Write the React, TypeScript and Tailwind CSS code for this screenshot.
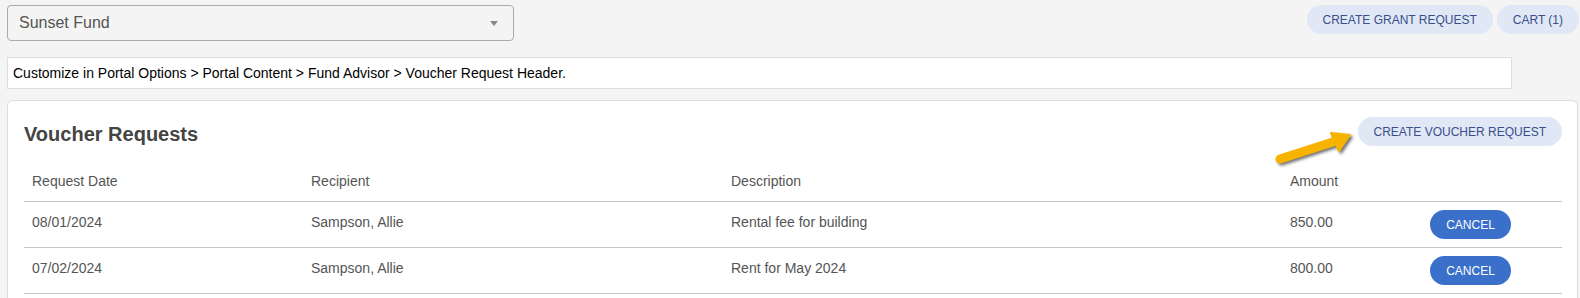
const rows = [
  { date: '08/01/2024', recipient: 'Sampson, Allie', description: 'Rental fee for building', amount: '850.00' },
  { date: '07/02/2024', recipient: 'Sampson, Allie', description: 'Rent for May 2024', amount: '800.00' },
];

const cols = 'grid grid-cols-[279px_420px_559px_140px_1fr]';

export default function App() {
  return (
    <main className="min-h-screen bg-[#f4f4f4] font-['Liberation_Sans',Arial,sans-serif] pl-[7px] pr-px pt-[5px]">
      <div className="flex items-start justify-between">
        <div className="w-[507px] h-[36px] rounded-[4px] border border-[#aaaaaa] flex items-center justify-between pl-[11px] pr-[14px]">
          <span className="text-[16px] text-[#555555]">Sunset Fund</span>
          <span className="w-0 h-0 border-l-[4px] border-r-[4px] border-t-[5px] border-l-transparent border-r-transparent border-t-[#888888] mr-[1px]" />
        </div>
        <div className="flex gap-[4px]">
          <button className="h-[29px] px-[16px] rounded-full bg-[#e0e8f5] text-[12px] text-[#3a4e8c]">CREATE GRANT REQUEST</button>
          <button className="h-[29px] px-[16px] rounded-full bg-[#e0e8f5] text-[12px] text-[#3a4e8c]">CART (1)</button>
        </div>
      </div>

      <div className="mt-[16px] w-[1505px] h-[32px] bg-white border border-[#dddddd] flex items-center pl-[5px] text-[14px] text-black">
        Customize in Portal Options &gt; Portal Content &gt; Fund Advisor &gt; Voucher Request Header.
      </div>

      <section className="relative mt-[11px] mr-px bg-white border border-[#dddddd] rounded-[6px] pl-[16px] pr-[15px] pt-[16px] pb-4">
        <div className="flex items-center justify-between h-[29px]">
          <h2 className="text-[20px] font-bold text-[#444444] mt-[4px]">Voucher Requests</h2>
          <button className="h-[29px] px-[16px] rounded-full bg-[#e0e8f5] text-[12px] text-[#3a4e8c]">CREATE VOUCHER REQUEST</button>
        </div>

        <svg className="absolute left-[1262px] top-[25px] overflow-visible" width="92" height="40" viewBox="0 0 92 40">
          <g style={{ filter: 'drop-shadow(2px 2px 1.5px rgba(0,0,0,0.55))' }}>
            <line x1="10" y1="33" x2="66" y2="15" stroke="#f6b400" strokeWidth="9" strokeLinecap="round" />
            <polygon points="80,9 61,7 69,25" fill="#f6b400" stroke="#f6b400" strokeWidth="2" strokeLinejoin="round" />
          </g>
        </svg>

        <div className={`${cols} h-[56px] items-end pb-[12px] border-b border-[#c4c4c4] text-[14px] text-[#555555] leading-4`}>
          <div className="pl-2">Request Date</div>
          <div className="pl-2">Recipient</div>
          <div className="pl-2">Description</div>
          <div className="pl-2">Amount</div>
          <div />
        </div>

        {rows.map((r) => (
          <div key={r.date} className={`${cols} h-[46px] border-b border-[#c4c4c4] text-[14px] text-[#555555] leading-4`}>
            <div className="pl-2 pt-[12px]">{r.date}</div>
            <div className="pl-2 pt-[12px]">{r.recipient}</div>
            <div className="pl-2 pt-[12px]">{r.description}</div>
            <div className="pl-2 pt-[12px]">{r.amount}</div>
            <div className="pl-2 pt-[8px]">
              <button className="h-[29px] w-[81px] rounded-full bg-[#3a70c9] text-[12px] text-white">CANCEL</button>
            </div>
          </div>
        ))}
      </section>
    </main>
  );
}
